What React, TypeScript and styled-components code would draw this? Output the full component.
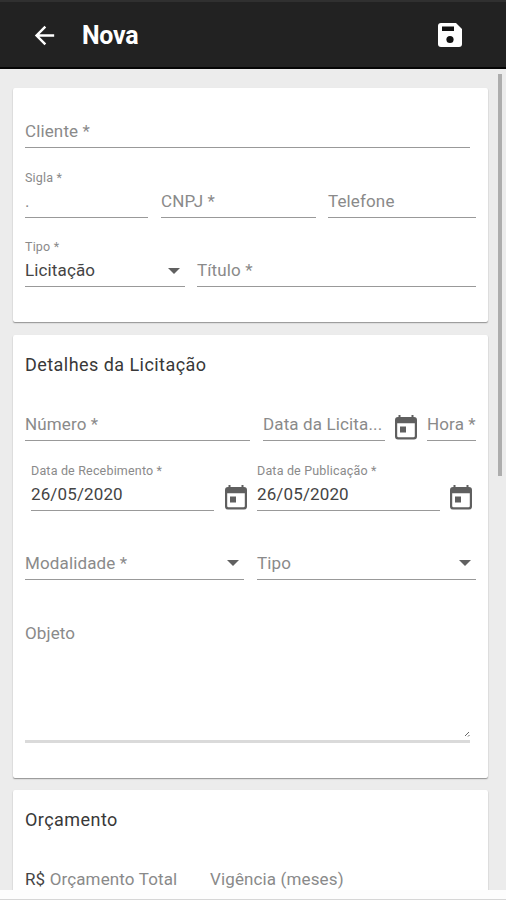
import React from 'react';
import styled, { createGlobalStyle } from 'styled-components';

const GlobalStyle = createGlobalStyle`
  * { box-sizing: border-box; }
  body { margin: 0; background: #ececec; font-family: Roboto, "Liberation Sans", sans-serif; }
`;

const Screen = styled.div`
  width: 506px;
  height: 900px;
  display: flex;
  flex-direction: column;
  overflow: hidden;
  background: #ececec;
`;

const Toolbar = styled.header`
  flex: none;
  height: 69px;
  display: flex;
  align-items: center;
  padding: 1px 43px 0 30px;
  background: #222222;
  border-top: 2px solid #303030;
  border-bottom: 2px solid #050505;
  color: #ffffff;
`;

const Title = styled.h1`
  flex: 1;
  margin: 2px 0 0 23px;
  font-size: 25px;
  font-weight: 700;
  line-height: 32px;
  letter-spacing: -0.3px;
`;

const Body = styled.div`
  flex: 1;
  min-height: 0;
  display: flex;
  overflow: hidden;
`;

const Cards = styled.main`
  flex: none;
  width: 488px;
  padding: 19px 0 0 13px;
  display: flex;
  flex-direction: column;
  gap: 12.5px;
`;

const ScrollThumb = styled.div`
  width: 4px;
  height: 402px;
  margin: 5px 0 0 10px;
  background: #adadad;
`;

const Card = styled.section<{ $height: number }>`
  flex: none;
  height: ${p => p.$height}px;
  padding: 0 12px;
  background: #ffffff;
  border-radius: 2px;
  box-shadow: 0 1px 1px rgba(0, 0, 0, 0.3), 0 1px 2px rgba(0, 0, 0, 0.12);
`;

const Heading = styled.h2`
  margin: 18px 0 0;
  font-size: 18px;
  font-weight: 400;
  line-height: 24px;
  letter-spacing: 0.45px;
  color: #383838;
`;

const Row = styled.div<{ $top: number; $indent?: number }>`
  display: flex;
  height: 49px;
  margin-top: ${p => p.$top}px;
  padding-left: ${p => p.$indent ?? 0}px;
`;

const FieldBox = styled.div<{ $width: number; $gap: number }>`
  flex: none;
  width: ${p => p.$width}px;
  margin-right: ${p => p.$gap}px;
  display: flex;
  flex-direction: column;
  border-bottom: 1px solid #999999;
  white-space: nowrap;
`;

const FloatLabel = styled.span`
  height: 16px;
  font-size: 12.5px;
  line-height: 17px;
  letter-spacing: 0.18px;
  color: #8a8a8a;
`;

const ValueLine = styled.div`
  display: flex;
  align-items: center;
  justify-content: space-between;
  height: 22px;
  margin-top: 5px;
  padding-right: 5px;
`;

const Text = styled.span<{ $filled?: boolean }>`
  font-size: 17px;
  line-height: 22px;
  letter-spacing: 0.13px;
  color: ${p => (p.$filled ? '#444444' : '#8a8a8a')};
`;

const Prefix = styled.span`
  color: #444444;
`;

const Caret = styled.span`
  margin-top: 1px;
  border: 6px solid transparent;
  border-top-color: #606060;
  border-bottom: 0;
`;

const CalendarSlot = styled.div<{ $gap: number }>`
  flex: none;
  width: 22px;
  height: 25px;
  margin: 23px ${p => p.$gap}px 0 0;
`;

const TextArea = styled.div`
  display: flex;
  flex-direction: column;
  justify-content: space-between;
  width: 445px;
  height: 121px;
  margin-top: 42px;
  border-bottom: 3px solid #dadada;
`;

const Grip = styled.svg`
  align-self: flex-end;
  margin-bottom: 3px;
`;

const BottomBar = styled.footer`
  flex: none;
  height: 10px;
  background: #fdfdfd;
  border-bottom: 1px solid #d6d6d6;
`;

type FieldProps = {
  width: number;
  gap?: number;
  label?: string;
  prefix?: string;
  text: string;
  filled?: boolean;
  select?: boolean;
};

function Field({ width, gap = 0, label, prefix, text, filled, select }: FieldProps) {
  return (
    <FieldBox $width={width} $gap={gap}>
      <FloatLabel>{label}</FloatLabel>
      <ValueLine>
        <Text $filled={filled}>
          {prefix && <Prefix>{prefix} </Prefix>}
          {text}
        </Text>
        {select && <Caret />}
      </ValueLine>
    </FieldBox>
  );
}

function Calendar({ gap = 0 }: { gap?: number }) {
  return (
    <CalendarSlot $gap={gap}>
      <svg width="22" height="25" viewBox="0 0 22 25">
        <path fill="#5f5f5f" fillRule="evenodd" d="M3.500 0h2v2h11V0h2v2h.5q3 0 3 3v16.500q0 3-3 3H3q-3 0-3-3V5q0-3 3-3h.5zM2.200 8.200V21q0 1.300 1.300 1.300h15q1.300 0 1.300-1.300V8.200z" />
        <path fill="#5f5f5f" d="M5 11.500h6v6H5z" />
      </svg>
    </CalendarSlot>
  );
}

export default function App() {
  return (
    <Screen>
      <GlobalStyle />
      <Toolbar>
        <svg width="29" height="29" viewBox="0 0 24 24" fill="#ffffff">
          <path d="M20 11H7.830l5.590-5.590L12 4l-8 8 8 8 1.410-1.410L7.830 13H20z" />
        </svg>
        <Title>Nova</Title>
        <svg width="26" height="26" viewBox="0 0 26 26">
          <path fill="#ffffff" d="M4 1h15l6 6v15q0 3-3 3H4q-3 0-3-3V4q0-3 3-3z" />
          <path fill="#111111" d="M5 4.500h12v4.500H5z" />
          <circle cx="13" cy="17.500" r="3.600" fill="#111111" />
        </svg>
      </Toolbar>
      <Body>
        <Cards>
          <Card $height={234}>
            <Row $top={11}>
              <Field width={445} text="Cliente *" />
            </Row>
            <Row $top={21}>
              <Field width={123} gap={13} label="Sigla *" text="." />
              <Field width={155} gap={12} text="CNPJ *" />
              <Field width={148} text="Telefone" />
            </Row>
            <Row $top={20}>
              <Field width={160} gap={12} label="Tipo *" text="Licitação" filled select />
              <Field width={279} text="Título *" />
            </Row>
          </Card>
          <Card $height={443}>
            <Heading>Detalhes da Licitação</Heading>
            <Row $top={15}>
              <Field width={225} gap={13} text="Número *" />
              <Field width={122} gap={10} text="Data da Licita..." />
              <Calendar gap={10} />
              <Field width={49} text="Hora *" />
            </Row>
            <Row $top={21} $indent={6}>
              <Field width={183} gap={11} label="Data de Recebimento *" text="26/05/2020" filled />
              <Calendar gap={10} />
              <Field width={183} gap={10} label="Data de Publicação *" text="26/05/2020" filled />
              <Calendar />
            </Row>
            <Row $top={20}>
              <Field width={219} gap={13} text="Modalidade *" select />
              <Field width={219} text="Tipo" select />
            </Row>
            <TextArea>
              <Text>Objeto</Text>
              <Grip width="6" height="6" viewBox="0 0 6 6" stroke="#666666" strokeWidth="1">
                <path d="M1 5L5 1M4 5.500L5.500 4" />
              </Grip>
            </TextArea>
          </Card>
          <Card $height={130}>
            <Heading>Orçamento</Heading>
            <Row $top={15}>
              <Field width={185} prefix="R$" text="Orçamento Total" />
              <Field width={140} text="Vigência (meses)" />
            </Row>
          </Card>
        </Cards>
        <ScrollThumb />
      </Body>
      <BottomBar />
    </Screen>
  );
}
